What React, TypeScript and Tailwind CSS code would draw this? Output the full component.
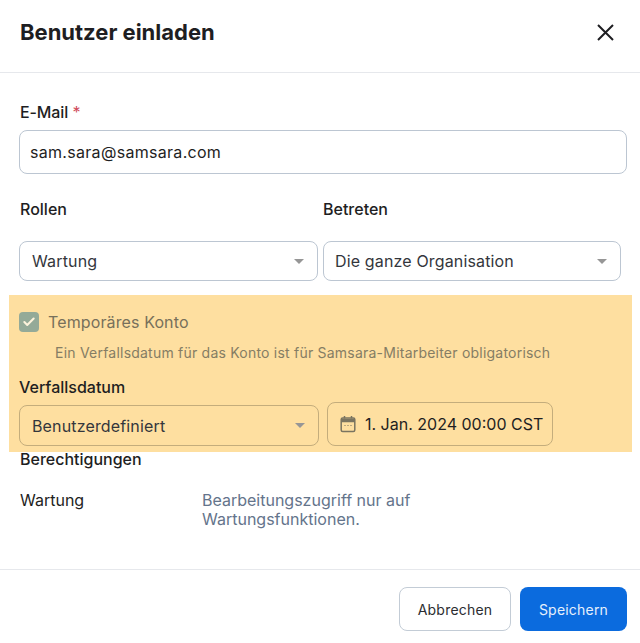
import { Check } from "lucide-react";

const Caret = () => (
  <svg className="w-[10px] h-[5px] shrink-0" viewBox="0 0 10 5">
    <path d="M0 0h10L5 5z" fill="#969696" />
  </svg>
);

const Select = ({ label, className }: { label: string; className: string }) => (
  <div className={`flex items-center justify-between pr-[13px] rounded-lg border text-[16px] tracking-[0.15px] ${className}`}>
    <span>{label}</span>
    <Caret />
  </div>
);

const App = () => {
  return (
    <div className="w-[640px] h-[643px] bg-white overflow-hidden text-[#1e1e22] font-['Inter',sans-serif] flex flex-col">
      {/* Header */}
      <div className="h-[73px] shrink-0 border-b border-[#e6e8ec] pl-5 pr-[26px] pb-[8px] flex items-center justify-between">
        <h1 className="text-[22px] font-bold">Benutzer einladen</h1>
        <svg className="w-[17px] h-[17px]" viewBox="0 0 17 17" fill="none" stroke="#1e1e22" strokeWidth="2">
          <path d="M1 1l15 15M16 1L1 16" />
        </svg>
      </div>

      {/* Body */}
      <div className="h-[497px] shrink-0 pt-[29px] border-b border-[#e6e8ec]">
        <div className="pl-5 text-[16px] font-medium tracking-[-0.1px] leading-5">
          E-Mail <span className="text-[#cf4a5a] font-normal">*</span>
        </div>
        <div className="mt-[8px] ml-[19px] w-[608px] h-[44px] rounded-lg border border-[#bcc6d2] pl-[10px] flex items-center text-[16px] tracking-[0.3px]">
          sam.sara@samsara.com
        </div>

        <div className="mt-[25px] flex pl-5 text-[16px] font-medium leading-5">
          <div className="w-[303px]">Rollen</div>
          <div>Betreten</div>
        </div>
        <div className="mt-[22px] ml-[19px] flex gap-[5px] h-[40px]">
          <Select label="Wartung" className="w-[299px] pl-3 border-[#bcc6d2] text-[#33363c]" />
          <Select label="Die ganze Organisation" className="w-[298px] pl-[11px] border-[#bcc6d2] text-[#33363c]" />
        </div>

        {/* Highlighted block */}
        <div className="mt-[14px] ml-[9px] w-[623px] h-[157px] bg-[#fedfa0] pl-[10px] pt-[17px]">
          <div className="flex items-center gap-[9px] h-5">
            <div className="w-5 h-5 rounded-[4px] bg-[#94aa98] flex items-center justify-center">
              <Check className="w-[14px] h-[14px] text-[#fdf3dc]" strokeWidth={3.5} />
            </div>
            <span className="text-[16px] tracking-[0.12px] text-[#77705b]">Temporäres Konto</span>
          </div>
          <div className="mt-[12px] ml-[36px] text-[14px] tracking-[0.22px] leading-[18px] whitespace-nowrap text-[#857d64]">
            Ein Verfallsdatum für das Konto ist für Samsara-Mitarbeiter obligatorisch
          </div>
          <div className="mt-[15px] text-[16px] font-medium leading-5">Verfallsdatum</div>
          <div className="mt-[5px] flex items-end gap-2">
            <Select label="Benutzerdefiniert" className="w-[300px] h-[41px] pl-3 border-[#c4ad7c] text-[#33363c]" />
            <div className="w-[226px] h-[44px] rounded-lg border border-[#c4ad7c] flex items-center pl-3 gap-[9px] text-[16px]">
              <svg className="w-[16px] h-[18px] shrink-0" viewBox="0 0 16 18" fill="none" stroke="#7a7460" strokeWidth="1.5">
                <rect x="1.2" y="3" width="13.6" height="13.6" rx="1.5" />
                <path d="M1.2 5.5h13.6" strokeWidth="3.5" />
                <path d="M4.5 1v2.5M11.5 1v2.5" />
                <path d="M4.5 10.5h1M7.5 10.5h1M10.5 10.5h1" strokeWidth="1.2" />
              </svg>
              <span className="whitespace-nowrap">1. Jan. 2024 00:00 CST</span>
            </div>
          </div>
        </div>

        <div className="pl-5 text-[16px] font-medium leading-5 -mt-[3px]">Berechtigungen</div>
        <div className="mt-[22px] pl-5 flex text-[16px] leading-[19px]">
          <div className="w-[182px]">Wartung</div>
          <div className="w-[260px] text-[#64748b]">Bearbeitungszugriff nur auf Wartungsfunktionen.</div>
        </div>
      </div>

      {/* Footer */}
      <div className="pt-[17px] pr-[13px] flex justify-end gap-[9px] text-[14px] tracking-[0.2px]">
        <button className="w-[112px] h-[44px] rounded-lg border border-[#c3ccd6] text-[#2b2d31]">Abbrechen</button>
        <button className="w-[107px] h-[44px] rounded-lg bg-[#0b6bde] text-[#e6f0fc]">Speichern</button>
      </div>
    </div>
  );
};

export default App;
